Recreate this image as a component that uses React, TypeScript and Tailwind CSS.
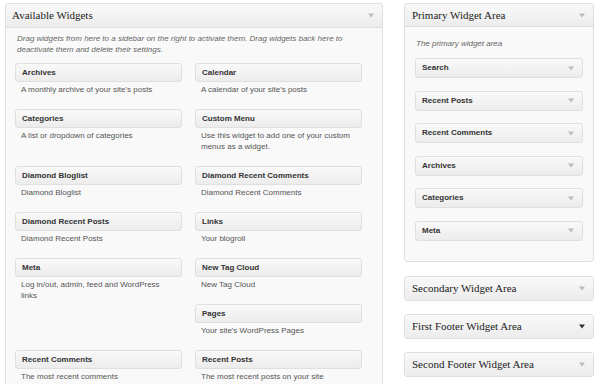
import React from "react";

const SANS = "font-['Liberation_Sans',Arial,sans-serif]";
const SERIF = "font-['Liberation_Serif',Georgia,serif]";

type Widget = { title: string; desc: string[]; span?: boolean };

// Meta spans two rows, so Pages drops into the right column beside it
const WIDGETS: Widget[] = [
  { title: "Archives", desc: ["A monthly archive of your site's posts"] },
  { title: "Calendar", desc: ["A calendar of your site's posts"] },
  { title: "Categories", desc: ["A list or dropdown of categories"] },
  { title: "Custom Menu", desc: ["Use this widget to add one of your custom", "menus as a widget."] },
  { title: "Diamond Bloglist", desc: ["Diamond Bloglist"] },
  { title: "Diamond Recent Comments", desc: ["Diamond Recent Comments"] },
  { title: "Diamond Recent Posts", desc: ["Diamond Recent Posts"] },
  { title: "Links", desc: ["Your blogroll"] },
  { title: "Meta", desc: ["Log in/out, admin, feed and WordPress", "links"], span: true },
  { title: "New Tag Cloud", desc: ["New Tag Cloud"] },
  { title: "Pages", desc: ["Your site's WordPress Pages"] },
  { title: "Recent Comments", desc: ["The most recent comments"] },
  { title: "Recent Posts", desc: ["The most recent posts on your site"] },
];

const PRIMARY = ["Search", "Recent Posts", "Recent Comments", "Archives", "Categories", "Meta"];

function Arrow({ dark }: { dark?: boolean }) {
  return (
    <svg width="6" height="5" viewBox="0 0 6 5" className="shrink-0">
      <path d="M0 0.5h6L3 4.5z" fill={dark ? "#333" : "#bbb"} />
    </svg>
  );
}

function WidgetItem({ w }: { w: Widget }) {
  return (
    <div className={w.span ? "row-span-2" : ""}>
      <div className="flex h-[19px] items-center rounded-[3px] border border-[#dfdfdf] bg-linear-to-b from-[#f9f9f9] to-[#ececec] px-[6px] text-[8px] font-bold text-[#333]">
        {w.title}
      </div>
      <div className="mt-[2px] pl-[6px] text-[8px] leading-[11px] text-[#555]">
        {w.desc.map((d) => (
          <div key={d}>{d}</div>
        ))}
      </div>
    </div>
  );
}

function AreaHeader({ title, dark, border }: { title: string; dark?: boolean; border?: boolean }) {
  return (
    <div
      className={`flex h-[23px] items-center justify-between rounded-t-[3px] bg-linear-to-b from-[#f9f9f9] to-[#ececec] pl-[7px] pr-[8px] ${
        border ? "border-b border-[#dfdfdf]" : ""
      }`}
    >
      <span className={`${SERIF} text-[11px] text-[#222]`}>{title}</span>
      <Arrow dark={dark} />
    </div>
  );
}

function Collapsed({ title, dark }: { title: string; dark?: boolean }) {
  return (
    <div className="overflow-hidden rounded-[3px] border border-[#dfdfdf]">
      <AreaHeader title={title} dark={dark} />
    </div>
  );
}

export default function App() {
  return (
    <div className={`${SANS} flex h-[384px] w-[600px] overflow-hidden bg-white pl-[5px] pt-[3px]`}>
      {/* available widgets */}
      <div className="h-[400px] w-[378px] shrink-0 rounded-[3px] border border-[#dfdfdf] bg-[#f9f9f9]">
        <div className="flex h-[24px] items-center justify-between rounded-t-[3px] border-b border-[#dfdfdf] bg-linear-to-b from-[#f9f9f9] to-[#ececec] pl-[6px] pr-[8px]">
          <span className={`${SERIF} text-[11px] text-[#222]`}>Available Widgets</span>
          <Arrow />
        </div>
        <div className="pl-[11px] pt-[5px] text-[8px] italic leading-[11px] text-[#666]">
          Drag widgets from here to a sidebar on the right to activate them. Drag widgets back here to
          <br />
          deactivate them and delete their settings.
        </div>
        <div className="mt-[8px] grid grid-cols-[167px_167px] gap-x-[13px] pl-[9px] [grid-template-rows:46px_57px_46px_46px_46px_46px_46px]">
          {WIDGETS.map((w) => (
            <WidgetItem key={w.title} w={w} />
          ))}
        </div>
      </div>

      {/* sidebars */}
      <div className="ml-[21px] flex w-[190px] shrink-0 flex-col">
        <div className="rounded-[3px] border border-[#dfdfdf] bg-[#f9f9f9]">
          <AreaHeader title="Primary Widget Area" border />
          <div className="px-[10px] pb-[20px]">
            <div className="pl-[1px] pt-[11px] text-[8px] italic leading-[11px] text-[#666]">The primary widget area</div>
            <div className="mt-[9px] flex flex-col gap-[12.6px]">
              {PRIMARY.map((p) => (
                <div
                  key={p}
                  className="flex h-[20px] items-center justify-between rounded-[3px] border border-[#dfdfdf] bg-linear-to-b from-[#f9f9f9] to-[#ececec] pl-[6px] pr-[8px] text-[8px] font-bold text-[#333]"
                >
                  {p}
                  <Arrow />
                </div>
              ))}
            </div>
          </div>
        </div>
        <div className="mt-[14px] flex flex-col gap-[13px]">
          <Collapsed title="Secondary Widget Area" />
          <Collapsed title="First Footer Widget Area" dark />
          <Collapsed title="Second Footer Widget Area" />
        </div>
      </div>
    </div>
  );
}
